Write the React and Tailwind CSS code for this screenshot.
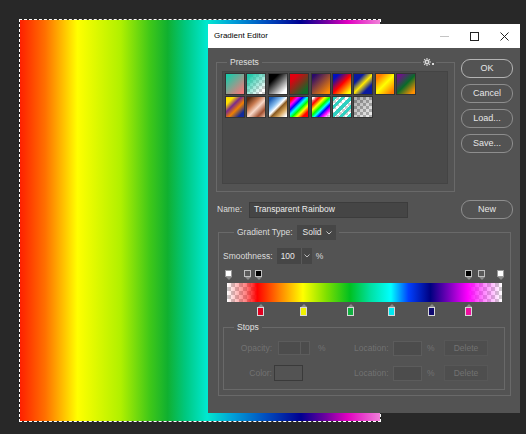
import React from "react";

const SWATCHES = [
  "bg-[linear-gradient(135deg,#1fc8a8_10%,#f07a7a_90%)]",
  "bg-[image:linear-gradient(135deg,#1fc8a8_10%,rgba(31,200,168,0)_85%),conic-gradient(#cfcfcf_25%,#ffffff_0_50%,#cfcfcf_0_75%,#ffffff_0)] bg-[length:100%_100%,6px_6px]",
  "bg-[linear-gradient(135deg,#000000_25%,#ffffff_85%)]",
  "bg-[linear-gradient(135deg,#e00010_20%,#106a28_85%)]",
  "bg-[linear-gradient(135deg,#2a0a6a_10%,#ff8a00_90%)]",
  "bg-[linear-gradient(135deg,#0010c0_15%,#ff0000_50%,#ffff00_90%)]",
  "bg-[linear-gradient(135deg,#0a1aa0_25%,#ffe800_50%,#0a1aa0_75%)]",
  "bg-[linear-gradient(135deg,#ff7a00_15%,#ffff00_50%,#ff7a00_90%)]",
  "bg-[linear-gradient(135deg,#70108a_10%,#0a6a2a_50%,#ff9000_90%)]",
  "bg-[linear-gradient(135deg,#ffe000_20%,#7a2a8a_40%,#f08000_60%,#102a9a_85%)]",
  "bg-[linear-gradient(135deg,#5a2a10_10%,#c87a50_35%,#f8d8c8_55%,#a05030_80%,#f0c0a8_100%)]",
  "bg-[linear-gradient(135deg,#1a5ab0_10%,#8ac0f0_35%,#ffffff_48%,#8a5a20_58%,#d8a860_75%,#ffffff_95%)]",
  "bg-[linear-gradient(135deg,#ff0000_10%,#ff00ff_22%,#0000ff_34%,#00ffff_46%,#00ff00_58%,#ffff00_70%,#ff0000_85%)]",
  "bg-[image:linear-gradient(135deg,rgba(255,0,0,0)_5%,#ff0000_20%,#ffff00_35%,#00ff00_48%,#00ffff_58%,#0000ff_68%,#ff00ff_80%,rgba(255,0,255,0)_95%),conic-gradient(#cfcfcf_25%,#ffffff_0_50%,#cfcfcf_0_75%,#ffffff_0)] bg-[length:100%_100%,6px_6px]",
  "bg-[image:repeating-linear-gradient(135deg,#30d0c0_0_3px,rgba(255,255,255,0)_3px_6px),conic-gradient(#cfcfcf_25%,#ffffff_0_50%,#cfcfcf_0_75%,#ffffff_0)] bg-[length:100%_100%,6px_6px]",
  "bg-[image:linear-gradient(135deg,rgba(0,0,0,0.35),rgba(0,0,0,0.05)),conic-gradient(#bdbdbd_25%,#ffffff_0_50%,#bdbdbd_0_75%,#ffffff_0)] bg-[length:100%_100%,6px_6px]",
];

function Btn({ children, strong }) {
  return (
    <div
      className={`w-[52px] h-[19px] rounded-[9px] flex items-center justify-center text-[9px] text-[#e6e6e6] ${
        strong ? "border-[1.5px] border-[#b4b4b4]" : "border border-[#8e8e8e]"
      }`}
    >
      {children}
    </div>
  );
}

function Chevron({ color }) {
  return (
    <svg width="6" height="4" viewBox="0 0 6 4">
      <polyline points="0.5,0.5 3,3 5.5,0.5" fill="none" stroke={color} strokeWidth="1" />
    </svg>
  );
}

function TopStop({ pos, sq }) {
  return (
    <div className={`absolute top-0 flex flex-col items-center ${pos}`}>
      <div className={`w-[7px] h-[7px] border ${sq}`} />
      <div className="w-0 h-0 border-x-[3px] border-x-transparent border-t-[3px] border-t-[#8a8a8a]" />
    </div>
  );
}

function BottomStop({ pos, sq }) {
  return (
    <div className={`absolute top-0 flex flex-col items-center ${pos}`}>
      <div className="w-0 h-0 border-x-[3px] border-x-transparent border-b-[3px] border-b-[#8a8a8a]" />
      <div className={`w-[7px] h-[9px] border border-[#d8d8d8] ${sq}`} />
    </div>
  );
}

function LocationGroup() {
  return (
    <>
      <div className="w-[35px]">Location:</div>
      <div className="ml-[4px] w-[29px] h-[15px] bg-[#4c4c4c] border border-[#5c5c5c]" />
      <div className="w-[22px] pl-[5px]">%</div>
      <div className="w-[44px] h-[16px] bg-[#4e4e4e] border border-[#575757] flex items-center justify-center">
        Delete
      </div>
    </>
  );
}

export default function App() {
  return (
    <div className="relative w-[526px] h-[434px] overflow-hidden bg-[#282828] font-['Liberation_Sans',Arial,sans-serif] text-[8.5px] leading-none text-[#dcdcdc]">
      {/* canvas */}
      <div className="ml-[19px] mt-[19px] w-[362px] h-[403px] border border-dashed border-white bg-clip-padding bg-[linear-gradient(to_right,#ff2000_0%,#ff7000_7%,#ffff00_16%,#b0f000_28%,#40c818_36%,#10b030_41%,#00c880_46%,#00e8d0_52%,#00a0d8_59%,#0050c0_68%,#000090_78%,#7000a0_85%,#e000c0_91%,#f080d8_100%)]" />

      {/* dialog window */}
      <div className="absolute left-[208px] top-[24px] w-[312px] h-[389px] bg-[#535353] flex flex-col">
        {/* title bar */}
        <div className="h-[24px] bg-white flex items-center shrink-0">
          <div className="pl-[6px] text-[8px] text-black">Gradient Editor</div>
          <div className="ml-auto mr-[1px] flex">
            <div className="w-[30px] h-[24px] flex items-center justify-center">
              <svg width="9" height="9" viewBox="0 0 9 9">
                <line x1="0" y1="4.5" x2="9" y2="4.5" stroke="#c4c4c4" strokeWidth="1" />
              </svg>
            </div>
            <div className="w-[30px] h-[24px] flex items-center justify-center">
              <svg width="9" height="9" viewBox="0 0 9 9">
                <rect x="0.5" y="0.5" width="8" height="8" fill="none" stroke="#222" strokeWidth="1" />
              </svg>
            </div>
            <div className="w-[30px] h-[24px] flex items-center justify-center">
              <svg width="9" height="9" viewBox="0 0 9 9">
                <path d="M0.5 0.5 L8.5 8.5 M8.5 0.5 L0.5 8.5" stroke="#222" strokeWidth="1" />
              </svg>
            </div>
          </div>
        </div>

        {/* body */}
        <div className="flex flex-col pl-[8px] pr-[7px]">
          {/* row 1: presets + buttons */}
          <div className="flex items-start">
            <div className="relative mt-[14px] w-[239px] h-[130px] border border-[#696969] pl-[5px] pr-[6px] pt-[8px] pb-[7px]">
              <div className="absolute top-[-7px] left-[10px] px-[3px] bg-[#535353] leading-[12px] text-[#e0e0e0]">
                Presets
              </div>
              <div className="absolute top-[-5px] right-[18px] px-[2px] bg-[#535353] flex items-end gap-[1px]">
                <svg width="8" height="8" viewBox="0 0 8 8">
                  <circle cx="4" cy="4" r="2.4" fill="#d8d8d8" />
                  <circle cx="4" cy="4" r="0.9" fill="#535353" />
                  <path
                    d="M4 0 V1.6 M4 6.4 V8 M0 4 H1.6 M6.4 4 H8 M1.2 1.2 L2.3 2.3 M5.7 5.7 L6.8 6.8 M6.8 1.2 L5.7 2.3 M2.3 5.7 L1.2 6.8"
                    stroke="#d8d8d8"
                    strokeWidth="1.2"
                  />
                </svg>
                <div className="w-[2px] h-[2px] bg-[#d8d8d8] mb-[1px]" />
              </div>
              <div className="w-full h-full bg-[#4a4a4a] border border-[#444444] pl-[2px] pt-[1px]">
                <div className="grid grid-cols-[repeat(9,20px)] gap-x-[1.4px] gap-y-[1px]">
                  {SWATCHES.map((c, i) => (
                    <div key={i} className={`w-[20px] h-[22px] border border-[#333333] ${c}`} />
                  ))}
                </div>
              </div>
            </div>
            <div className="ml-auto mt-[11px] flex flex-col gap-[6px]">
              <Btn strong>OK</Btn>
              <Btn>Cancel</Btn>
              <Btn>Load...</Btn>
              <Btn>Save...</Btn>
            </div>
          </div>

          {/* row 2: name */}
          <div className="mt-[8px] flex items-center h-[19px]">
            <div className="w-[33px] pl-[1px]">Name:</div>
            <div className="w-[159px] h-[16px] bg-[#454545] border border-[#3c3c3c] flex items-center pl-[4px] text-[#ececec]">
              Transparent Rainbow
            </div>
            <div className="ml-auto">
              <Btn>New</Btn>
            </div>
          </div>

          {/* row 3: gradient type group */}
          <div className="relative mt-[13px] mx-[2px] border border-[#696969] pl-[4px] pt-[15px] pb-[5px]">
            <div className="absolute top-[-8px] left-[15px] px-[3px] bg-[#535353] flex items-center h-[15px]">
              <span>Gradient Type:</span>
              <div className="ml-[4px] w-[39px] h-[15px] bg-[#464646] flex items-center pl-[6px] pr-[4px] text-[#e8e8e8]">
                <span>Solid</span>
                <span className="ml-auto">
                  <Chevron color="#c8c8c8" />
                </span>
              </div>
            </div>

            {/* smoothness */}
            <div className="flex items-center h-[16px]">
              <div>Smoothness:</div>
              <div className="ml-[4px] w-[35px] h-[16px] bg-[#464646] flex items-center text-[#e8e8e8]">
                <div className="w-[24px] pl-[4px]">100</div>
                <div className="flex-1 h-full border-l border-[#5a5a5a] flex items-center justify-center">
                  <Chevron color="#bcbcbc" />
                </div>
              </div>
              <div className="ml-[4px]">%</div>
            </div>

            {/* opacity stops */}
            <div className="relative mt-[6px] ml-[4px] w-[275px] h-[10px]">
              <TopStop pos="left-[-2px]" sq="bg-white border-[#9a9a9a]" />
              <TopStop pos="left-[17px]" sq="bg-[#5a5a5a] border-[#c0c0c0]" />
              <TopStop pos="left-[28px]" sq="bg-black border-[#c0c0c0]" />
              <TopStop pos="left-[238px]" sq="bg-black border-[#c0c0c0]" />
              <TopStop pos="left-[251px]" sq="bg-[#5a5a5a] border-[#c0c0c0]" />
              <TopStop pos="left-[270px]" sq="bg-white border-[#9a9a9a]" />
            </div>

            {/* gradient bar */}
            <div className="mt-[3px] ml-[4px] w-[275px] h-[19px] bg-[image:linear-gradient(to_right,rgba(255,0,0,0)_0%,rgba(255,0,0,0.5)_7%,#ff0000_11%,#ff8000_19%,#ffff00_27.6%,#80e000_36%,#00c020_44.7%,#00e0a0_52%,#00ffff_59.6%,#0040ff_66%,#000080_74%,#8000c0_81%,#ff00ff_87.6%,rgba(255,0,255,0.5)_93%,rgba(255,0,255,0)_100%),conic-gradient(#cccccc_25%,#ffffff_0_50%,#cccccc_0_75%,#ffffff_0)] bg-[length:100%_100%,8px_8px]" />

            {/* color stops */}
            <div className="relative mt-[2px] ml-[4px] w-[275px] h-[12px]">
              <BottomStop pos="left-[30px]" sq="bg-[#e00020]" />
              <BottomStop pos="left-[73px]" sq="bg-[#f0f000]" />
              <BottomStop pos="left-[120px]" sq="bg-[#10b040]" />
              <BottomStop pos="left-[161px]" sq="bg-[#00e8f0]" />
              <BottomStop pos="left-[201px]" sq="bg-[#100a70]" />
              <BottomStop pos="left-[238px]" sq="bg-[#ee10a0]" />
            </div>

            {/* stops group */}
            <div className="relative mt-[11px] w-[282px] border border-[#696969] pt-[12px] pb-[8px] text-[#727272]">
              <div className="absolute top-[-7px] left-[10px] px-[3px] bg-[#535353] leading-[12px] text-[#e0e0e0]">
                Stops
              </div>
              <div className="flex items-center h-[16px]">
                <div className="w-[48px] text-right">Opacity:</div>
                <div className="ml-[6px] w-[32px] h-[14px] bg-[#4c4c4c] border border-[#5c5c5c] flex">
                  <div className="w-[21px]" />
                  <div className="flex-1 border-l border-[#5c5c5c]" />
                </div>
                <div className="w-[44px] pl-[8px]">%</div>
                <LocationGroup />
              </div>
              <div className="mt-[9px] flex items-center h-[16px]">
                <div className="w-[48px] text-right">Color:</div>
                <div className="ml-[2px] w-[29px] h-[16px] bg-[#535353] border border-[#3a3a3a]" />
                <div className="w-[51px]" />
                <LocationGroup />
              </div>
            </div>
          </div>
        </div>
      </div>
    </div>
  );
}
